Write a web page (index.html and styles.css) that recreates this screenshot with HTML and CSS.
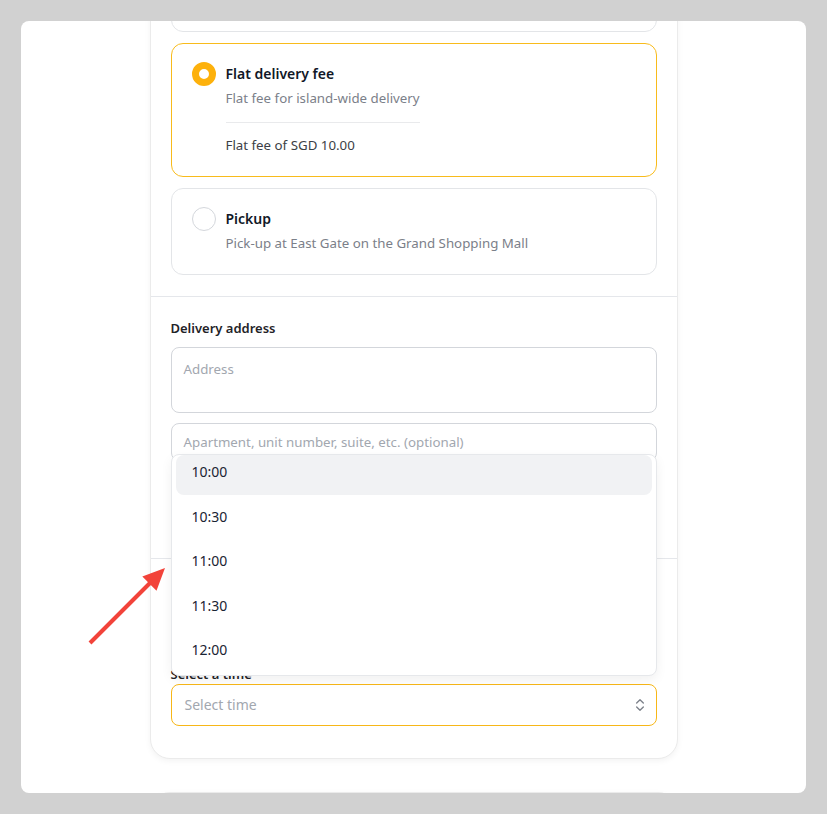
FILE: index.html
```html
<!DOCTYPE html>
<html lang="en">
<head>
<meta charset="utf-8">
<title>Checkout – delivery</title>
<link rel="stylesheet" href="styles.css">
</head>
<body>
<div class="frame">
  <div class="scroller">
    <div class="card">
      <section class="sec sec-options">
        <div class="opt opt-clipped"></div>
        <div class="opt opt-active">
          <span class="radio radio-on"></span>
          <div class="opt-text">
            <div class="opt-title">Flat delivery fee</div>
            <div class="opt-desc">Flat fee for island-wide delivery</div>
            <div class="opt-divider"></div>
            <div class="opt-fee">Flat fee of SGD 10.00</div>
          </div>
        </div>
        <div class="opt">
          <span class="radio"></span>
          <div class="opt-text">
            <div class="opt-title">Pickup</div>
            <div class="opt-desc">Pick-up at East Gate on the Grand Shopping Mall</div>
          </div>
        </div>
      </section>

      <section class="sec sec-address">
        <div class="label label-address">Delivery address</div>
        <div class="field field-area"><span class="ph">Address</span></div>
        <div class="field field-input"><span class="ph">Apartment, unit number, suite, etc. (optional)</span></div>
      </section>

      <section class="sec sec-time">
        <div class="label label-time">Select a time</div>
        <div class="select-wrap">
          <div class="select">
            <span class="ph ph-select">Select time</span>
            <svg class="chev" width="16" height="16" viewBox="0 0 24 24" fill="none" stroke="currentColor" stroke-width="2" stroke-linecap="round" stroke-linejoin="round"><path d="m7 15 5 5 5-5"/><path d="m7 9 5-5 5 5"/></svg>
          </div>
          <ul class="listbox">
            <li class="item item-hover">10:00</li>
            <li class="item">10:30</li>
            <li class="item">11:00</li>
            <li class="item">11:30</li>
            <li class="item">12:00</li>
          </ul>
        </div>
      </section>
    </div>
    <div class="card card-next"></div>
  </div>

  <svg class="arrow" width="120" height="120" viewBox="0 0 120 120">
    <line x1="30" y1="103" x2="92" y2="41" stroke="#f2433a" stroke-width="4"/>
    <polygon points="105,28 96.5,50.7 82.3,36.5" fill="#f2433a"/>
  </svg>
</div>
</body>
</html>
```

FILE: styles.css
```css
* { box-sizing: border-box; }

html, body {
  margin: 0;
  padding: 0;
  background: #d1d1d1;
  font-family: "Noto Sans", "Open Sans", Arial, sans-serif;
  color: #111827;
}

.frame {
  position: relative;
  margin: 21px;
  height: 772px;
  background: #ffffff;
  border-radius: 8px;
  overflow: hidden;
}

.scroller {
  margin-top: -97px;
  display: flex;
  flex-direction: column;
  align-items: center;
  gap: 33px;
}

.card {
  width: 528px;
  background: #ffffff;
  border: 1px solid #ebebeb;
  border-radius: 20px;
  box-shadow: 0 2px 6px rgba(0, 0, 0, 0.05);
}

.card-next {
  height: 120px;
}

.sec {
  padding: 20px;
}

.sec + .sec {
  border-top: 1px solid #e5e7eb;
}

.sec-options {
  display: flex;
  flex-direction: column;
  gap: 11px;
  padding-bottom: 21px;
}

/* option cards */
.opt {
  display: flex;
  align-items: flex-start;
  gap: 10px;
  padding: 20px 20px 21px;
  border: 1px solid #e3e5e8;
  border-radius: 12px;
}

.opt-clipped {
  height: 87px;
}

.opt-active {
  border-color: #f8bb1c;
}

.radio {
  flex: none;
  width: 24px;
  height: 24px;
  margin-top: -2px;
  border-radius: 50%;
  border: 1.5px solid #d4d7dc;
  background: #fff;
}

.radio-on {
  border: 7px solid #fdb10c;
}

.opt-text {
  display: flex;
  flex-direction: column;
  width: fit-content;
}

.opt-title {
  font-size: 14px;
  line-height: 20px;
  font-weight: 600;
  color: #111827;
}

.opt-desc {
  margin-top: 4px;
  font-size: 13.3px;
  line-height: 20px;
  color: #7b8089;
}

.opt-divider {
  height: 1px;
  margin-top: 14px;
  background: #e9eaec;
}

.opt-fee {
  margin-top: 12px;
  font-size: 13.3px;
  line-height: 20px;
  color: #3c3f46;
}

/* fields */
.label {
  font-size: 13px;
  line-height: 20px;
  font-weight: 600;
  color: #1f2328;
}

.sec-address {
  padding-top: 21px;
  padding-bottom: 97px;
}

.label-address {
  margin-bottom: 9px;
}

.field {
  border: 1px solid #d3d6db;
  border-radius: 8px;
  padding: 0 12px;
  font-size: 13px;
}

.ph {
  color: #a2a7af;
  font-size: 13.3px;
  line-height: 20px;
}

.ph-select {
  font-size: 14px;
}

.field-area {
  height: 66px;
  padding-top: 11px;
}

.field-input {
  margin-top: 10px;
  height: 38px;
  display: flex;
  align-items: center;
}

.sec-time {
  padding-top: 106px;
  padding-bottom: 32px;
}

.label-time {
  line-height: 18px;
  margin-bottom: 1px;
}

.select-wrap {
  position: relative;
}

.select {
  height: 42px;
  border: 1px solid #f7b718;
  border-radius: 8px;
  padding: 0 8px 0 13px;
  display: flex;
  align-items: center;
  justify-content: space-between;
}

.chev {
  color: #7c818a;
}

/* popover list */
.listbox {
  position: absolute;
  left: 0;
  right: 0;
  bottom: calc(100% + 8px);
  margin: 0;
  padding: 0 4px 2px;
  list-style: none;
  background: #ffffff;
  border: 1px solid #e6e8eb;
  border-radius: 8px;
  box-shadow: 0 4px 12px rgba(0, 0, 0, 0.06);
  display: flex;
  flex-direction: column;
  gap: 4.5px;
}

.item {
  height: 40px;
  padding: 0 0 7px 16px;
  display: flex;
  align-items: center;
  font-size: 14px;
  color: #1a2433;
  border-radius: 8px;
}

.item-hover {
  background: #f1f2f4;
}

/* annotation arrow */
.arrow {
  position: absolute;
  left: 39px;
  top: 519px;
}
```
